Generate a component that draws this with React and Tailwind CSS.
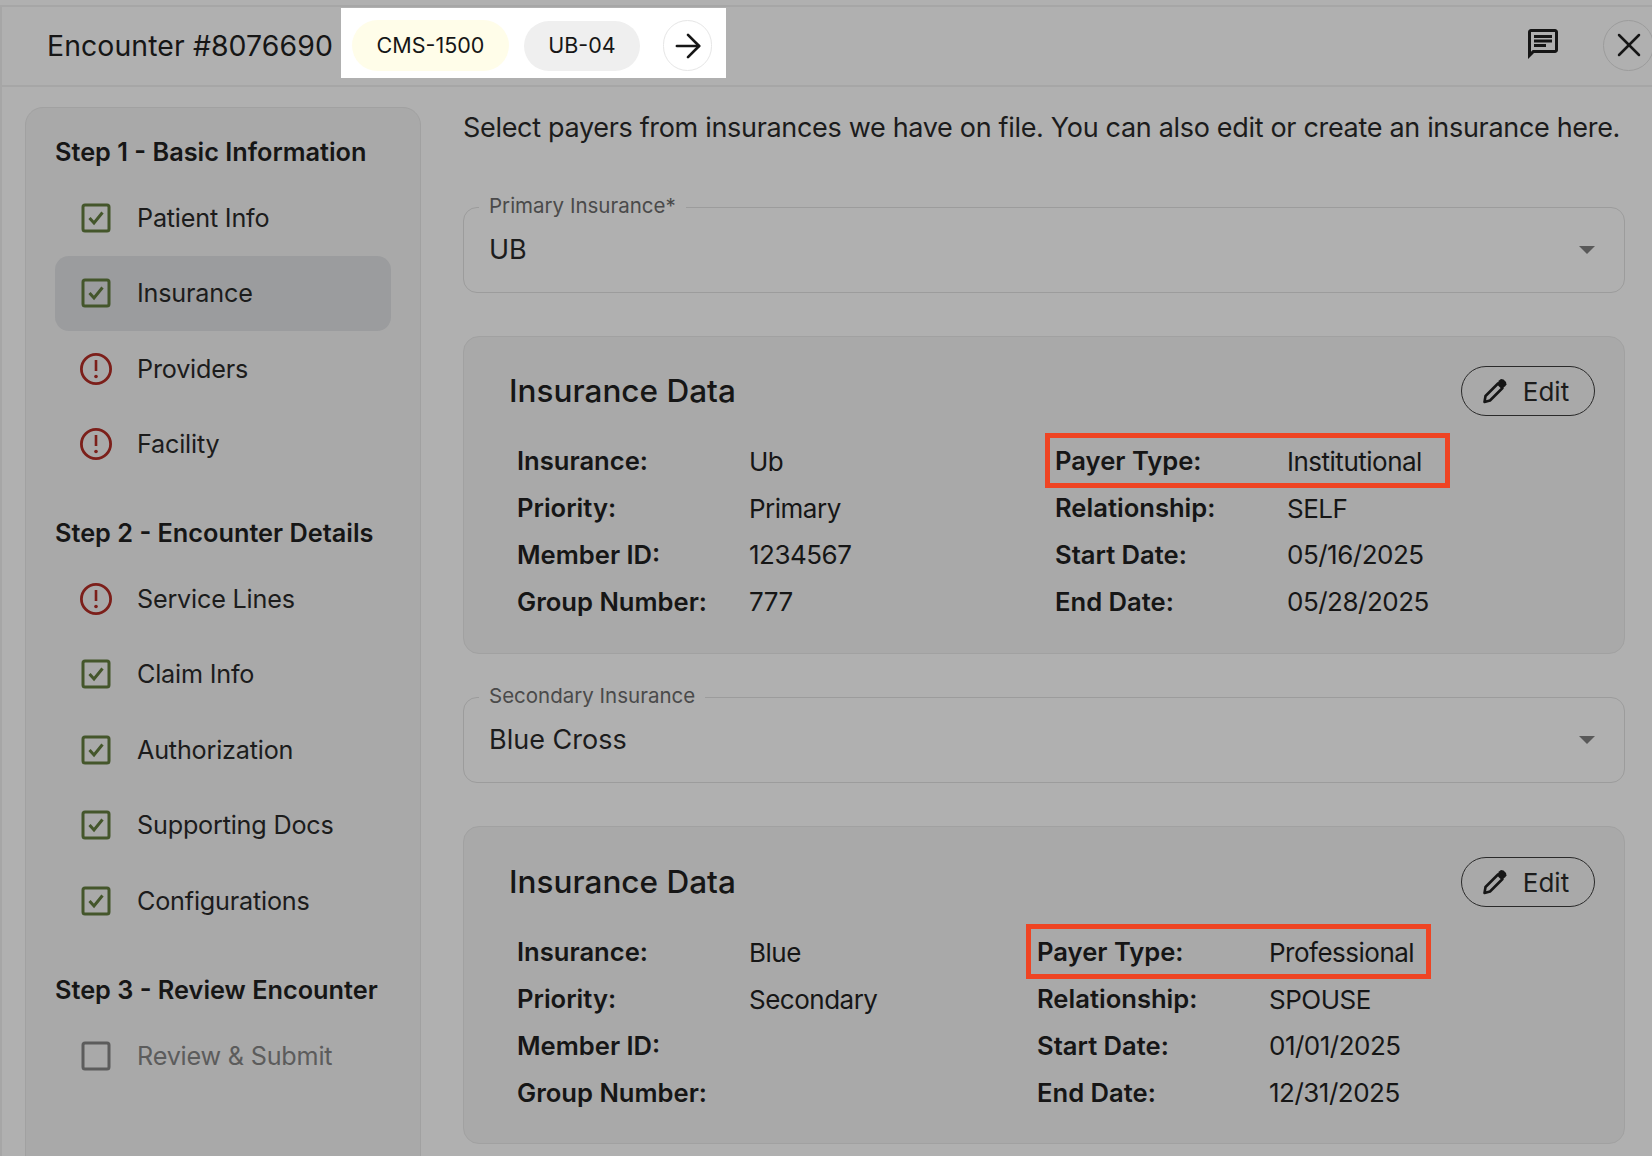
import { ArrowRight, X } from "lucide-react";
import { MdOutlineChat } from "react-icons/md";

function CheckIcon() {
  return (
    <svg width="30" height="30" viewBox="0 0 30 30" fill="none" className="shrink-0">
      <rect x="2" y="2" width="26" height="26" rx="2" stroke="#44562b" strokeWidth="3" />
      <path d="M8.5 15l4.5 5L21.5 9.5" stroke="#44562b" strokeWidth="3" />
    </svg>
  );
}

function EmptyIcon() {
  return (
    <svg width="30" height="30" viewBox="0 0 30 30" fill="none" className="shrink-0">
      <rect x="2" y="2" width="26" height="26" rx="2" stroke="#5c5c5c" strokeWidth="3" />
    </svg>
  );
}

function ErrorIcon() {
  return (
    <svg width="34" height="34" viewBox="0 0 34 34" fill="none" className="shrink-0">
      <circle cx="17" cy="17" r="14.6" stroke="#7c1f1a" strokeWidth="2.8" />
      <path d="M17 8v11" stroke="#7c1f1a" strokeWidth="2.6" />
      <circle cx="17" cy="24.5" r="1.8" fill="#7c1f1a" />
    </svg>
  );
}

function NavItem({ label, status, active }) {
  return (
    <div className={`flex h-[75.5px] w-[336px] items-center rounded-[14px] ${active ? "bg-[#9b9c9e]" : ""}`}>
      <div className="flex w-[82px] shrink-0 justify-center pr-[1px]">
        {status === "done" && <CheckIcon />}
        {status === "error" && <ErrorIcon />}
        {status === "empty" && <EmptyIcon />}
      </div>
      <span className={`pt-[2px] text-[25.2px] tracking-[-0.2px] ${status === "empty" ? "text-[#5c5c5c]" : "text-[#1c1c1c]"}`}>
        {label}
      </span>
    </div>
  );
}

function StepTitle({ children, className }) {
  return <h3 className={`text-[25.3px] font-semibold leading-[32px] text-[#161616] ${className}`}>{children}</h3>;
}

function SelectBox({ label, value, className }) {
  return (
    <div className={`relative flex h-[86px] items-center justify-between rounded-[14px] border border-[#9c9c9c] pl-[25px] pr-[29px] ${className}`}>
      <span className="absolute left-[15px] top-[-15px] bg-[#b0b0b0] px-[10px] text-[20.5px] leading-[26px] text-[#4a4a4a]">
        {label}
      </span>
      <span className="text-[27px] text-[#1c1c1c]">{value}</span>
      <span className="h-0 w-0 border-x-[8px] border-t-[8px] border-x-transparent border-t-[#595959]" />
    </div>
  );
}

function Field({ label, value }) {
  return (
    <div className="flex h-[46.8px] items-center text-[26px] text-[#161616]">
      <span className="w-[232px] shrink-0 text-[25.6px] font-semibold">{label}</span>
      <span className="tracking-[-0.5px]">{value}</span>
    </div>
  );
}

function InsuranceCard({ left, right, rightClass, boxClass, className }) {
  return (
    <div className={`h-[318px] rounded-[16px] border border-[#a1a1a1] bg-[#a9a9a9] pl-[45px] pr-[29px] ${className}`}>
      <div className="flex items-center justify-between">
        <h2 className="text-[31.5px] font-medium text-[#161616]">Insurance Data</h2>
        <button className="flex h-[50px] w-[134px] items-center justify-center gap-[14px] rounded-full border border-[#2a2a2a] pr-[6px] text-[26px] text-[#1c1c1c]">
          <svg width="28" height="28" viewBox="0 0 28 28" fill="none">
            <path d="M3.5 25l1-6L17 6.5l4.5 4.5L9 23.5 3.5 25z" stroke="#161616" strokeWidth="2.6" strokeLinejoin="round" />
            <path d="M18 3.5l2-1.5 2.5.5 2.5 2.5.5 2.5-1.5 2-2 1-5-5z" fill="#161616" />
          </svg>
          Edit
        </button>
      </div>
      <div className="mt-[22px] flex pl-[8px]">
        <div className="w-[538px] shrink-0">
          {left.map((f) => (
            <Field key={f[0]} label={f[0]} value={f[1]} />
          ))}
        </div>
        <div className={rightClass}>
          <div className="relative">
            <Field label={right[0][0]} value={right[0][1]} />
            <div className={`absolute top-[-5px] h-[55px] border-[5px] border-[#ef4423] ${boxClass}`} />
          </div>
          {right.slice(1).map((f) => (
            <Field key={f[0]} label={f[0]} value={f[1]} />
          ))}
        </div>
      </div>
    </div>
  );
}

export default function App() {
  return (
    <div className="h-[1156px] w-[1652px] overflow-hidden bg-[#b0b0b0] pt-[5px] font-['Inter',sans-serif]">
      <div className="h-full border-l-[2px] border-t-[2px] border-[#a6a6a6]">
        <header className="flex h-[80px] items-center border-b-[2px] border-[#a6a6a6] pb-[2px] pl-[45px]">
          <h1 className="mt-[2px] w-[294px] shrink-0 whitespace-nowrap text-[28.4px] font-normal tracking-[0.1px] text-[#161616]">Encounter #8076690</h1>
          <div className="mt-[1px] flex h-[70px] w-[385px] items-center self-start bg-white pl-[11px] pt-[5px]">
            <span className="flex h-[51px] w-[157px] items-center justify-center rounded-full bg-[#fffde9] text-[21.5px] text-[#161616]">
              CMS-1500
            </span>
            <span className="ml-[15px] flex h-[50px] w-[116px] items-center justify-center rounded-full bg-[#efefef] text-[21.5px] text-[#161616]">
              UB-04
            </span>
            <span className="ml-[23px] flex h-[51px] w-[49px] items-center justify-center rounded-full border border-[#e6e6e6]">
              <ArrowRight size={38} strokeWidth={1.7} color="#161616" />
            </span>
          </div>
          <div className="ml-auto flex items-center">
            <MdOutlineChat size={36} color="#161616" className="mb-[3px] mr-[42px]" />
            <span className="mr-[-2px] flex h-[51px] w-[51px] items-center justify-center rounded-full border border-[#9c9c9c]">
              <X size={40} strokeWidth={1.5} color="#161616" />
            </span>
          </div>
        </header>

        <div className="flex pl-[23px] pr-[26px] pt-[20px]">
          <aside className="h-[1100px] w-[396px] shrink-0 rounded-t-[18px] border border-[#a1a1a1] bg-[#a9a9a9] pl-[29px] pt-[28px]">
            <StepTitle>Step 1 - Basic Information</StepTitle>
            <div className="mt-[12px]">
              <NavItem label="Patient Info" status="done" />
              <NavItem label="Insurance" status="done" active />
              <NavItem label="Providers" status="error" />
              <NavItem label="Facility" status="error" />
            </div>
            <StepTitle className="mt-[35px]">Step 2 - Encounter Details</StepTitle>
            <div className="mt-[12px]">
              <NavItem label="Service Lines" status="error" />
              <NavItem label="Claim Info" status="done" />
              <NavItem label="Authorization" status="done" />
              <NavItem label="Supporting Docs" status="done" />
              <NavItem label="Configurations" status="done" />
            </div>
            <StepTitle className="mt-[35px]">Step 3 - Review Encounter</StepTitle>
            <div className="mt-[13px]">
              <NavItem label="Review & Submit" status="empty" />
            </div>
          </aside>

          <main className="ml-[42px] w-[1162px] shrink-0">
            <p className="whitespace-nowrap text-[27px] leading-[42px] tracking-[-0.32px] text-[#1c1c1c]">
              Select payers from insurances we have on file. You can also edit or create an insurance here.
            </p>
            <SelectBox label="Primary Insurance*" value="UB" className="mt-[58px]" />
            <InsuranceCard
              className="mt-[43px] pt-[29px]"
              rightClass="w-[400px]"
              boxClass="left-[-10px] w-[405px]"
              left={[
                ["Insurance:", "Ub"],
                ["Priority:", "Primary"],
                ["Member ID:", "1234567"],
                ["Group Number:", "777"],
              ]}
              right={[
                ["Payer Type:", "Institutional"],
                ["Relationship:", "SELF"],
                ["Start Date:", "05/16/2025"],
                ["End Date:", "05/28/2025"],
              ]}
            />
            <SelectBox label="Secondary Insurance" value="Blue Cross" className="mt-[43px]" />
            <InsuranceCard
              className="mt-[43px] pt-[30px]"
              rightClass="ml-[-18px] w-[400px]"
              boxClass="left-[-11px] w-[405px]"
              left={[
                ["Insurance:", "Blue"],
                ["Priority:", "Secondary"],
                ["Member ID:", ""],
                ["Group Number:", ""],
              ]}
              right={[
                ["Payer Type:", "Professional"],
                ["Relationship:", "SPOUSE"],
                ["Start Date:", "01/01/2025"],
                ["End Date:", "12/31/2025"],
              ]}
            />
          </main>
        </div>
      </div>
    </div>
  );
}
